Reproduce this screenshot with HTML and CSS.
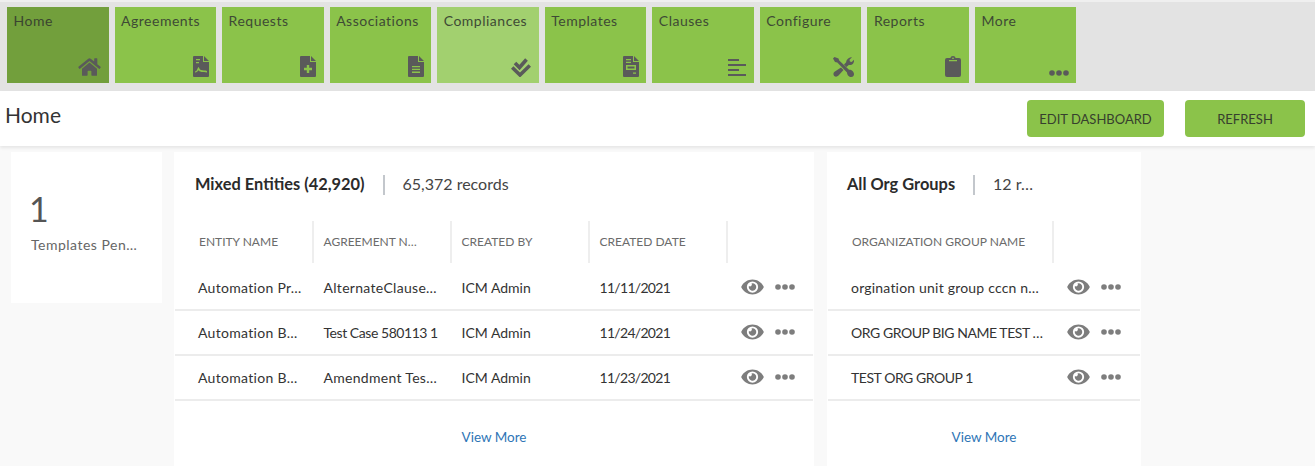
FILE: index.html
```html
<!DOCTYPE html>
<html lang="en">
<head>
<meta charset="utf-8">
<title>Home</title>
<link rel="stylesheet" href="styles.css">
</head>
<body>
<nav class="nav">
  <a class="tile tile-active"><span>Home</span>
    <svg class="ico i-home" viewBox="0 0 576 512"><path d="M280.37 148.26L96 300.11V464a16 16 0 0 0 16 16l112.06-.29a16 16 0 0 0 15.92-16V368a16 16 0 0 1 16-16h64a16 16 0 0 1 16 16v95.64a16 16 0 0 0 16 16.05L464 480a16 16 0 0 0 16-16V300L295.67 148.26a12.19 12.19 0 0 0-15.3 0zM571.6 251.47L488 182.56V44.05a12 12 0 0 0-12-12h-56a12 12 0 0 0-12 12v72.61L318.47 43a48 48 0 0 0-61 0L4.34 251.47a12 12 0 0 0-1.6 16.9l25.5 31A12 12 0 0 0 45.15 301l235.22-193.74a12.19 12.19 0 0 1 15.3 0L530.9 301a12 12 0 0 0 16.9-1.6l25.5-31a12 12 0 0 0-1.7-16.93z"/></svg></a>
  <a class="tile"><span>Agreements</span>
    <svg class="ico i-file" viewBox="0 0 16 21"><path d="M1 0h9v6h6v14a1 1 0 0 1-1 1H1a1 1 0 0 1-1-1V1a1 1 0 0 1 1-1zM11 0l5 5h-5z"/><path class="cut" d="M3 3h4v1.300H3zM3 6h3v1.300H3zM2 15.500c2 0 2.300-3 3.500-4.500 1 1 1 2.500 2.500 3 2 .5 4 .3 6 1v1.500c-2-.7-4-.5-5.500-.6-2-.4-2.300-.8-3-1.600-1 1.200-1.500 2-3.500 2.200z"/></svg></a>
  <a class="tile"><span>Requests</span>
    <svg class="ico i-file" viewBox="0 0 16 21"><path d="M1 0h9v6h6v14a1 1 0 0 1-1 1H1a1 1 0 0 1-1-1V1a1 1 0 0 1 1-1zM11 0l5 5h-5z"/><path class="cut" d="M6.800 9h2.400v2.800H12v2.400H9.200V17H6.800v-2.800H4v-2.400h2.800z"/></svg></a>
  <a class="tile"><span>Associations</span>
    <svg class="ico i-file" viewBox="0 0 16 21"><path d="M1 0h9v6h6v14a1 1 0 0 1-1 1H1a1 1 0 0 1-1-1V1a1 1 0 0 1 1-1zM11 0l5 5h-5z"/><path class="cut" d="M4 10h8v1.300H4zM4 12.800h8v1.300H4zM4 15.600h8v1.300H4z"/></svg></a>
  <a class="tile tile-hover"><span>Compliances</span>
    <svg class="ico i-check" viewBox="0 0 20 19"><path class="chk" d="M4 5l4.500 4.500L15.500 1.500"/><path class="chk" d="M1.200 9.500L9 17 18.800 7.500"/></svg></a>
  <a class="tile"><span>Templates</span>
    <svg class="ico i-file" viewBox="0 0 16 21"><path d="M1 0h9v6h6v14a1 1 0 0 1-1 1H1a1 1 0 0 1-1-1V1a1 1 0 0 1 1-1zM11 0l5 5h-5z"/><path class="cut" d="M3 3h5v1.200H3zM3 5.800h5V7H3zM3 9h10v5H3zM10 16.500h3v1.200h-3z"/><path d="M4.500 10.500h7v2h-7z"/></svg></a>
  <a class="tile"><span>Clauses</span>
    <svg class="ico i-lines" viewBox="0 0 18 17"><path d="M0 0h11v2H0zM0 5h18v2H0zM0 10h11v2H0zM0 15h18v2H0z"/></svg></a>
  <a class="tile"><span>Configure</span>
    <svg class="ico i-tools" viewBox="0 0 21 20"><path d="M1.500 0L0 1.500l2 3.500 2.300.6L14 15.500c0 2 1.500 4.500 4 4.500s3-2 3-3c0-2.500-2.500-4.500-5-4.300L6.200 3.600 5.500 1.500zM16 1c.8-.6 2-1 3-.7l-2.500 2.500.4 1.800 1.800.4L21 2.700c.3 1.800-.3 3.600-2 4.800-1 .6-2.200.7-3.200.4L13.500 10 11 7.500l2.200-2.300C13 3.600 14.500 2 16 1zM8 10.500l2.500 2.500-5 5.500c-1.200 1.300-3 1.600-4.300.4C0 17.700.2 16 1.500 14.800z"/></svg></a>
  <a class="tile"><span>Reports</span>
    <svg class="ico i-file" viewBox="0 0 16 21"><path d="M2 2h3.500C5.500.8 6.600 0 8 0s2.500.8 2.500 2H14a2 2 0 0 1 2 2v15a2 2 0 0 1-2 2H2a2 2 0 0 1-2-2V4a2 2 0 0 1 2-2z"/><path class="cut" d="M4 4h8v1.200H4zM7 1.800h2v1H7z"/></svg></a>
  <a class="tile"><span>More</span>
    <svg class="ico i-dots" viewBox="0 0 20 6"><circle cx="3" cy="3" r="2.800"/><circle cx="10" cy="3" r="2.800"/><circle cx="17" cy="3" r="2.800"/></svg></a>
</nav>

<header class="bar">
  <h1 class="title">Home</h1>
  <div class="actions">
    <button class="btn btn-edit">EDIT DASHBOARD</button>
    <button class="btn btn-refresh">REFRESH</button>
  </div>
</header>

<main class="board">
  <section class="card stat">
    <div class="stat-num">1</div>
    <div class="stat-label">Templates Pen…</div>
  </section>

  <section class="card wide">
    <div class="card-head">
      <h2 class="card-title">Mixed Entities (42,920)</h2>
      <span class="sep"></span>
      <span class="records">65,372 records</span>
    </div>
    <div class="row head cols-main">
      <div class="th">ENTITY NAME</div>
      <div class="th">AGREEMENT N…</div>
      <div class="th">CREATED BY</div>
      <div class="th">CREATED DATE</div>
      <div class="th"></div>
    </div>
    <div class="row item cols-main">
      <div class="td loose">Automation Pr…</div>
      <div class="td loose">AlternateClause…</div>
      <div class="td">ICM Admin</div>
      <div class="td date">11/11/2021</div>
      <div class="acts"><svg class="eye" viewBox="0 0 576 512"><path d="M572.52 241.4C518.29 135.59 410.93 64 288 64S57.68 135.64 3.48 241.41a32.35 32.35 0 0 0 0 29.19C57.71 376.41 165.07 448 288 448s230.32-71.64 284.52-177.41a32.35 32.35 0 0 0 0-29.19zM288 400a144 144 0 1 1 144-144 143.93 143.93 0 0 1-144 144zm0-240a95.31 95.31 0 0 0-25.31 3.79 47.85 47.85 0 0 1-66.9 66.9A95.78 95.78 0 1 0 288 160z"/></svg><svg class="more" viewBox="0 0 20 6"><circle cx="3" cy="3" r="2.800"/><circle cx="10" cy="3" r="2.800"/><circle cx="17" cy="3" r="2.800"/></svg></div>
    </div>
    <div class="row item cols-main">
      <div class="td loose">Automation B…</div>
      <div class="td tight">Test Case 580113 1</div>
      <div class="td">ICM Admin</div>
      <div class="td date">11/24/2021</div>
      <div class="acts"><svg class="eye" viewBox="0 0 576 512"><path d="M572.52 241.4C518.29 135.59 410.93 64 288 64S57.68 135.64 3.48 241.41a32.35 32.35 0 0 0 0 29.19C57.71 376.41 165.07 448 288 448s230.32-71.64 284.52-177.41a32.35 32.35 0 0 0 0-29.19zM288 400a144 144 0 1 1 144-144 143.93 143.93 0 0 1-144 144zm0-240a95.31 95.31 0 0 0-25.31 3.79 47.85 47.85 0 0 1-66.9 66.9A95.78 95.78 0 1 0 288 160z"/></svg><svg class="more" viewBox="0 0 20 6"><circle cx="3" cy="3" r="2.800"/><circle cx="10" cy="3" r="2.800"/><circle cx="17" cy="3" r="2.800"/></svg></div>
    </div>
    <div class="row item cols-main">
      <div class="td loose">Automation B…</div>
      <div class="td loose">Amendment Tes…</div>
      <div class="td">ICM Admin</div>
      <div class="td date">11/23/2021</div>
      <div class="acts"><svg class="eye" viewBox="0 0 576 512"><path d="M572.52 241.4C518.29 135.59 410.93 64 288 64S57.68 135.64 3.48 241.41a32.35 32.35 0 0 0 0 29.19C57.71 376.41 165.07 448 288 448s230.32-71.64 284.52-177.41a32.35 32.35 0 0 0 0-29.19zM288 400a144 144 0 1 1 144-144 143.93 143.93 0 0 1-144 144zm0-240a95.31 95.31 0 0 0-25.31 3.79 47.85 47.85 0 0 1-66.9 66.9A95.78 95.78 0 1 0 288 160z"/></svg><svg class="more" viewBox="0 0 20 6"><circle cx="3" cy="3" r="2.800"/><circle cx="10" cy="3" r="2.800"/><circle cx="17" cy="3" r="2.800"/></svg></div>
    </div>
    <a class="view-more">View More</a>
  </section>

  <section class="card narrow">
    <div class="card-head">
      <h2 class="card-title">All Org Groups</h2>
      <span class="sep"></span>
      <span class="records">12 r…</span>
    </div>
    <div class="row head cols-org">
      <div class="th">ORGANIZATION GROUP NAME</div>
      <div class="th"></div>
    </div>
    <div class="row item cols-org">
      <div class="td loose-sm">orgination unit group cccn n…</div>
      <div class="acts"><svg class="eye" viewBox="0 0 576 512"><path d="M572.52 241.4C518.29 135.59 410.93 64 288 64S57.68 135.64 3.48 241.41a32.35 32.35 0 0 0 0 29.19C57.71 376.41 165.07 448 288 448s230.32-71.64 284.52-177.41a32.35 32.35 0 0 0 0-29.19zM288 400a144 144 0 1 1 144-144 143.93 143.93 0 0 1-144 144zm0-240a95.31 95.31 0 0 0-25.31 3.79 47.85 47.85 0 0 1-66.9 66.9A95.78 95.78 0 1 0 288 160z"/></svg><svg class="more" viewBox="0 0 20 6"><circle cx="3" cy="3" r="2.800"/><circle cx="10" cy="3" r="2.800"/><circle cx="17" cy="3" r="2.800"/></svg></div>
    </div>
    <div class="row item cols-org">
      <div class="td tight">ORG GROUP BIG NAME TEST …</div>
      <div class="acts"><svg class="eye" viewBox="0 0 576 512"><path d="M572.52 241.4C518.29 135.59 410.93 64 288 64S57.68 135.64 3.48 241.41a32.35 32.35 0 0 0 0 29.19C57.71 376.41 165.07 448 288 448s230.32-71.64 284.52-177.41a32.35 32.35 0 0 0 0-29.19zM288 400a144 144 0 1 1 144-144 143.93 143.93 0 0 1-144 144zm0-240a95.31 95.31 0 0 0-25.31 3.79 47.85 47.85 0 0 1-66.9 66.9A95.78 95.78 0 1 0 288 160z"/></svg><svg class="more" viewBox="0 0 20 6"><circle cx="3" cy="3" r="2.800"/><circle cx="10" cy="3" r="2.800"/><circle cx="17" cy="3" r="2.800"/></svg></div>
    </div>
    <div class="row item cols-org">
      <div class="td tight">TEST ORG GROUP 1</div>
      <div class="acts"><svg class="eye" viewBox="0 0 576 512"><path d="M572.52 241.4C518.29 135.59 410.93 64 288 64S57.68 135.64 3.48 241.41a32.35 32.35 0 0 0 0 29.19C57.71 376.41 165.07 448 288 448s230.32-71.64 284.52-177.41a32.35 32.35 0 0 0 0-29.19zM288 400a144 144 0 1 1 144-144 143.93 143.93 0 0 1-144 144zm0-240a95.31 95.31 0 0 0-25.31 3.79 47.85 47.85 0 0 1-66.9 66.9A95.78 95.78 0 1 0 288 160z"/></svg><svg class="more" viewBox="0 0 20 6"><circle cx="3" cy="3" r="2.800"/><circle cx="10" cy="3" r="2.800"/><circle cx="17" cy="3" r="2.800"/></svg></div>
    </div>
    <a class="view-more">View More</a>
  </section>
</main>
</body>
</html>
```
FILE: styles.css
```css
* { box-sizing: border-box; }
html, body { height: 100%; }
body {
  margin: 0;
  height: 466px;
  overflow: hidden;
  background: #f9f9f9;
  font-family: "Lato", "Noto Sans", sans-serif;
  color: #333;
}
.nav {
  display: flex;
  gap: 6px;
  height: 91px;
  padding: 5px 7px 8px;
  background: #e3e3e3;
  border-top: 2px solid #efefef;
}
.tile {
  display: flex;
  flex-direction: column;
  justify-content: space-between;
  width: 101.55px;
  height: 76px;
  padding: 5px 7.5px 6px 6.5px;
  background: #8bc34a;
  color: #3e4a35;
  font-size: 14px;
  letter-spacing: 0.5px;
  line-height: 17px;
}
.tile-active { background: #729f3c; color: #3a4430; }
.tile-hover { background: #a2d06f; }
.ico { align-self: flex-end; fill: #5a5a5a; display: block; }
.ico .cut { fill: #8bc34a; }
.ico .chk { fill: none; stroke: #5a5a5a; stroke-width: 3.6; }
.i-home { width: 23px; height: 20px; }
.i-file { width: 16px; height: 21px; }
.i-check { width: 20px; height: 19px; }
.i-lines { width: 18px; height: 17px; margin-bottom: 1px; }
.i-tools { width: 21px; height: 20px; }
.i-dots { width: 20px; height: 6px; margin-bottom: 1px; }
.bar {
  display: flex;
  justify-content: space-between;
  align-items: flex-start;
  height: 55px;
  padding: 9px 10px 0 5px;
  background: #fff;
  box-shadow: 0 2px 3px rgba(0, 0, 0, 0.08);
  position: relative;
}
.title {
  margin: 2px 0 0;
  font-size: 21px;
  line-height: 26px;
  font-weight: 400;
  color: #333;
}
.actions { display: flex; gap: 21px; }
.btn {
  height: 37px;
  border: 0;
  border-radius: 4px;
  background: #8bc34a;
  color: #37402e;
  font-family: inherit;
  font-size: 13px;
  padding: 0;
}
.btn-edit { width: 137px; }
.btn-refresh { width: 120px; }
.board {
  display: flex;
  align-items: flex-start;
  padding: 6px 0 0 11px;
}
.card { background: #fff; }
.stat {
  width: 151px;
  height: 151px;
  margin-right: 12px;
  padding: 37px 0 0 20px;
}
.stat-num { font-size: 34px; line-height: 40px; color: #555; text-indent: -2px; }
.stat-label { font-size: 14px; line-height: 20px; color: #666; margin-top: 6px; letter-spacing: 0.5px; white-space: nowrap; }
.wide { width: 640px; height: 314px; margin-right: 13px; }
.narrow { width: 314px; height: 314px; }
.card-head {
  display: flex;
  align-items: center;
  height: 24px;
  margin: 19px 0 26px;
  padding-left: 21px;
}
.narrow .card-head { padding-left: 20px; }
.card-title { margin: 0; font-size: 16.4px; font-weight: 700; color: #2b2b2b; white-space: nowrap; }
.sep { width: 2px; height: 20px; margin: 4px 18px 0; background: #c3c7cc; }
.records { font-size: 16px; color: #444; white-space: nowrap; }
.row { display: grid; align-items: center; }
.cols-main { grid-template-columns: 139.5px 138px 138px 138px 86.5px; }
.cols-org { grid-template-columns: 227px 87px; }
.head { height: 42px; margin-bottom: 3px; }
.th {
  height: 42px;
  line-height: 42px;
  font-size: 12px;
  color: #6b6b6b;
  padding-left: 25px;
  border-right: 2px solid #eee;
  white-space: nowrap;
}
.cols-main .th + .th { padding-left: 10px; }
.th:last-child { border-right: 0; }
.item {
  height: 45px;
  margin: 0 1px;
  border-bottom: 2px solid #ececec;
}
.item.cols-main { grid-template-columns: 138.5px 138px 138px 138px 85.5px; }
.item.cols-org { grid-template-columns: 226px 86px; }
.td {
  font-size: 14px;
  color: #333;
  padding-left: 23px;
  white-space: nowrap;
}
.cols-main .td + .td { padding-left: 10px; }
.td.loose { letter-spacing: 0.3px; }
.td.loose-sm { letter-spacing: 0.2px; }
.td.tight { letter-spacing: -0.45px; }
.td.date { letter-spacing: -0.7px; }
.acts { display: flex; align-items: center; gap: 11px; padding: 0 0 2px 13px; }
.eye { width: 23px; height: 20px; fill: #7d7d7d; }
.more { width: 20px; height: 6px; fill: #7d7d7d; }
.view-more {
  display: block;
  margin-top: 28px;
  text-align: center;
  font-size: 13.5px;
  color: #2e75b6;
}
```
